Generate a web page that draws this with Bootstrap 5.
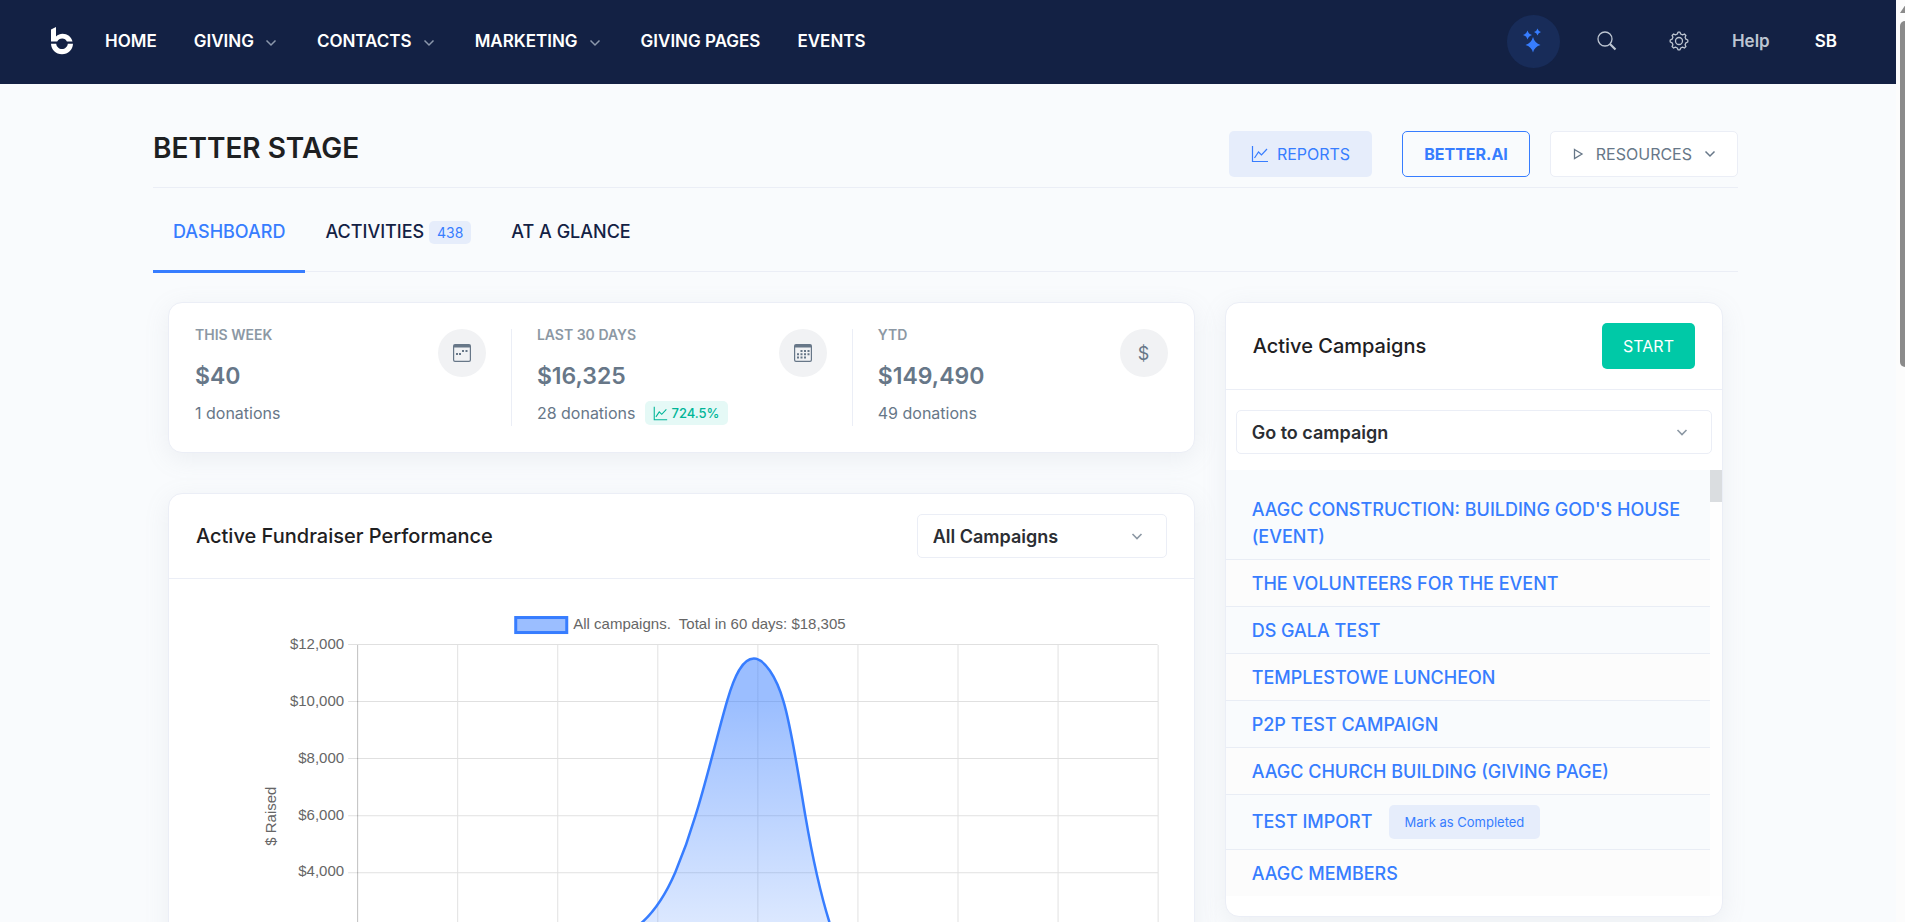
<!DOCTYPE html>
<html lang="en">
<head>
<meta charset="utf-8">
<meta name="viewport" content="width=device-width, initial-scale=1">
<title>Better Stage - Dashboard</title>
<link href="https://cdn.jsdelivr.net/npm/bootstrap@5.3.0/dist/css/bootstrap.min.css" rel="stylesheet">
<style>
  :root { --navy:#132144; --brand:#377dff; --soft:#e6edfb; --line:#ebeef6; --ink:#1e2022; --muted:#677788; }
  body { font-family:Inter, sans-serif; font-size:16px; color:var(--muted); background:#f9fbfd; height:100vh; overflow:hidden; }
  a { text-decoration:none; }
  .page-scroll { overflow:hidden; min-width:0; }
  .track { width:9px; background:#fcfcfc; overflow:hidden; padding:4px 0 0 4px; }
  .track svg { display:block; }
  .thumb { width:10px; height:346px; margin-top:8px; border-radius:5px 0 0 5px; background:#8b8b8b; }

  .topbar { background:var(--navy); height:84px; padding:0 59px 2px 50px; }
  .topbar a { color:#fff; font-size:17px; font-weight:600; }
  .main-links a, .side-links a { padding-top:2px; }
  .brand-mark { margin-right:31px; }
  .main-links { gap:37px; }
  .main-links .chev { margin:0 3px 0 11px; }
  .side-links { color:#bdc5d1; }
  .side-links a.help { color:#bdc5d1; margin:0 45px 0 43px; }
  .ai-btn { width:53px; height:53px; background:#182c59; margin-right:37px; }
  .search-btn { margin-right:52px; }

  .content { padding:0 158px 0 153px; }
  .page-head { height:104px; padding-top:47px; border-bottom:1px solid var(--line); }
  .page-head h1 { font-size:28px; line-height:34px; font-weight:600; color:var(--ink); }
  .btn { --bs-btn-font-size:16px; --bs-btn-line-height:24px; --bs-btn-padding-y:10px; --bs-btn-padding-x:20px; --bs-btn-border-radius:5px; }
  .page-head .btn { --bs-btn-padding-x:21px; }
  .btn-soft { --bs-btn-color:var(--brand); --bs-btn-bg:var(--soft); }
  .btn-frame { --bs-btn-color:var(--brand); --bs-btn-border-color:var(--brand); --bs-btn-font-weight:700; margin:0 20px 0 30px; }
  .btn-plain { --bs-btn-color:var(--muted); --bs-btn-bg:#fff; --bs-btn-border-color:var(--line); gap:12px; }
  .btn-go { --bs-btn-color:#fff; --bs-btn-bg:#00c9a7; }
  .btn-tiny { --bs-btn-font-size:13px; --bs-btn-line-height:18px; --bs-btn-padding-y:7px; --bs-btn-padding-x:15px; }

  .tabs { height:84px; border-bottom:1px solid var(--line); }
  .tabs a { color:var(--navy); font-size:18px; line-height:26px; font-weight:500; padding:31px 20px 0; height:85px; border-bottom:3px solid transparent; }
  .tabs a.active { color:var(--brand); border-color:var(--brand); }
  .count { font-size:14px; line-height:23px; font-weight:400; color:var(--brand); background:var(--soft); padding:0 8px; border-radius:5px; display:inline-block; }

  .columns { --bs-gutter-x:30px; padding-top:30px; }
  .panel { background:#fff; border:1px solid var(--line); border-radius:14px; box-shadow:0 6px 24px rgba(140,152,164,.125); }
  .panel + .panel { margin-top:40px; }
  .stats { padding:26px 1px; }
  .stat { min-height:97px; padding:0 25px; }
  .stat + .stat { border-left:1px solid var(--line); }
  .stat .kind { font-size:14px; line-height:12px; font-weight:600; color:#8c98a4; }
  .stat .amount { font-size:23px; line-height:30px; font-weight:600; margin-top:20px; }
  .stat .note { font-size:16px; line-height:26px; margin-top:9px; gap:10px; }
  .rise { font-size:13px; line-height:24px; font-weight:500; color:#00b598; background:#e5f9f6; border-radius:5px; padding:0 8px; gap:3px; }
  .stat-icon { width:48px; height:48px; background:#f1f2f4; color:#677788; font-size:18px; }
  .panel h2 { font-size:20px; line-height:26px; font-weight:500; color:var(--ink); }
  .panel-top { padding:20px 27px; border-bottom:1px solid var(--line); }
  .pick { height:44px; border:1px solid var(--line); border-radius:5px; padding:0 44px 0 15px; font-size:18px; font-weight:600; color:#2b2e33;
    background-color:#fff; background-position:right 22px center; background-size:14px 14px;
    background-image:url("data:image/svg+xml,%3Csvg xmlns='http://www.w3.org/2000/svg' viewBox='0 0 14 14'%3E%3Cpath d='M2.5 5l4.5 4.500 4.500-4.500' fill='none' stroke='%238c98a4' stroke-width='1.600'/%3E%3C/svg%3E"); }
  .pick-chart { width:250px; }

  .pick-row { padding:20px 10px 16px; }
  .camp-wrap { margin-bottom:20px; }
  .camp-list li { padding:10px 26px 9px; border-bottom:1px solid #e9edf5; background:#f9fbfd; font-size:18px; line-height:27px; }
  .camp-list li:nth-child(even) { background:#fcfcfc; }
  .camp-list li:first-child { padding-top:26px; }
  .camp-list li.tall { line-height:34px; padding-bottom:10px; }
  .camp-list li:last-child { border-bottom:0; }
  .camp-list a { color:var(--brand); font-weight:500; }
  .list-track { width:12px; background:#fefefe; }
  .list-thumb { height:32px; background:#dadde0; }
  .chart text { font-family:"Liberation Sans", Arial, sans-serif; font-size:15px; fill:#666; white-space:pre; }
</style>
</head>
<body class="d-flex">
<div class="page-scroll flex-grow-1">
  <nav class="topbar d-flex align-items-center">
    <a class="brand-mark" href="#" aria-label="Home">
      <svg class="d-block" width="24" height="28" viewBox="0 0 24 28" fill="#fff"><path d="M1 2.500L6 0v9.500C8 7.600 10.200 6.800 12.500 6.800c5 0 8.800 3 10 7.800h-5.600c-.9-2-2.500-3-4.700-3s-4 1-5 3H1z"/><path d="M1 16.800h5.200c.4 3.200 2.800 5.300 5.800 5.300s5.400-2.100 5.800-5.300H23c-.3 6-4.800 10.500-11 10.500S1.300 22.800 1 16.800z"/></svg>
    </a>
    <div class="main-links d-flex align-items-center">
      <a href="#">HOME</a>
      <a href="#">GIVING<svg class="chev" width="12" height="8" viewBox="0 0 12 8" fill="none" stroke="#8c98ac" stroke-width="1.500"><path d="M1.500 1.500L6 6l4.500-4.500"/></svg></a>
      <a href="#">CONTACTS<svg class="chev" width="12" height="8" viewBox="0 0 12 8" fill="none" stroke="#8c98ac" stroke-width="1.500"><path d="M1.500 1.500L6 6l4.500-4.500"/></svg></a>
      <a href="#">MARKETING<svg class="chev" width="12" height="8" viewBox="0 0 12 8" fill="none" stroke="#8c98ac" stroke-width="1.500"><path d="M1.500 1.500L6 6l4.500-4.500"/></svg></a>
      <a href="#">GIVING PAGES</a>
      <a href="#">EVENTS</a>
    </div>
    <div class="side-links d-flex align-items-center ms-auto">
      <button type="button" class="ai-btn border-0 rounded-circle p-0 d-flex align-items-center justify-content-center" aria-label="AI assistant">
        <svg width="20" height="26" viewBox="0 0 20 26" fill="#377dff"><path d="M10 9q1.600 6 7.500 8-5.900 1.500-7.500 7.500Q8.400 18.500 2.500 17 8.400 15 10 9z"/><path d="M4.500 2.500q.9 3.500 4.500 4.500-3.600 1-4.500 4.500Q3.600 8 0 7q3.600-1 4.500-4.500z"/><path d="M14.500.500q.7 2.800 3.500 3.500-2.800.700-3.500 3.500Q13.800 4.700 11 4q2.800-.7 3.500-3.500z"/></svg>
      </button>
      <button type="button" class="search-btn border-0 bg-transparent p-0 text-reset" aria-label="Search">
        <svg class="d-block" width="20" height="20" viewBox="0 0 20 20" fill="none" stroke="currentColor"><circle cx="8" cy="8" r="7" stroke-width="1.300"/><path d="M13 13l5.500 5.500" stroke-width="2.200"/></svg>
      </button>
      <button type="button" class="border-0 bg-transparent p-0 text-reset" aria-label="Settings">
        <svg class="d-block" width="20" height="20" viewBox="0 0 20 20" fill="none" stroke="currentColor" stroke-width="1.300"><circle cx="10" cy="10" r="3.500"/><path stroke-linejoin="round" d="M8.300 3L9 1.200h2L11.700 3l1.900.8 1.800-.8 1.500 1.500-.8 1.800.8 1.900 1.900.8v2l-1.900.8-.8 1.900.8 1.800-1.500 1.500-1.800-.8-1.900.8-.7 1.800H9L8.300 17l-1.900-.8-1.800.8-1.500-1.500.8-1.800-.8-1.900L1.200 11V9l1.900-.8.8-1.900-.8-1.800L4.600 3l1.800.8z"/></svg>
      </button>
      <a class="help" href="#">Help</a>
      <a href="#">SB</a>
    </div>
  </nav>

  <main class="content">
    <div class="page-head d-flex align-items-start">
      <h1 class="m-0">BETTER STAGE</h1>
      <a href="#" class="btn btn-soft ms-auto d-flex align-items-center gap-2">
        <svg width="18" height="18" viewBox="0 0 18 18" fill="none" stroke="currentColor" stroke-width="1.200"><path d="M1.500 1v15.500H17M3.500 13l4-6 3 3L16 4"/></svg>REPORTS</a>
      <a href="#" class="btn btn-frame">BETTER.AI</a>
      <button type="button" class="btn btn-plain d-flex align-items-center">
        <svg width="12" height="12" viewBox="0 0 12 12" fill="none" stroke="currentColor" stroke-width="1.300"><path d="M2.500 1.500L10 6l-7.500 4.500z"/></svg>RESOURCES
        <svg width="12" height="8" viewBox="0 0 12 8" fill="none" stroke="currentColor" stroke-width="1.500"><path d="M1.500 1.500L6 6l4.500-4.500"/></svg></button>
    </div>

    <nav class="tabs d-flex">
      <a href="#" class="active">DASHBOARD</a>
      <a href="#">ACTIVITIES <span class="count">438</span></a>
      <a href="#">AT A GLANCE</a>
    </nav>

    <div class="row columns mx-0">
      <div class="col-8">
        <section class="panel stats row row-cols-3 g-0">
          <div class="stat d-flex justify-content-between">
            <div>
              <div class="kind">THIS WEEK</div>
              <div class="amount">$40</div>
              <div class="note">1 donations</div>
            </div>
            <span class="stat-icon rounded-circle d-flex align-items-center justify-content-center">
              <svg width="20" height="20" viewBox="0 0 20 20" fill="currentColor"><path d="M3 1h14a2 2 0 0 1 2 2v14a2 2 0 0 1-2 2H3a2 2 0 0 1-2-2V3a2 2 0 0 1 2-2zM2.200 4.500V17c0 .5.300.8.800.8h14c.500 0 .8-.3.800-.8V4.500z" fill-rule="evenodd"/><path d="M4 10h2v2H4zM7 10h2v2H7zM10 7h2v2h-2zM13.500 7h2v2h-2z"/></svg>
            </span>
          </div>
          <div class="stat d-flex justify-content-between">
            <div>
              <div class="kind">LAST 30 DAYS</div>
              <div class="amount">$16,325</div>
              <div class="note d-flex align-items-center">28 donations
                <span class="rise d-flex align-items-center"><svg width="15" height="15" viewBox="0 0 18 18" fill="none" stroke="currentColor" stroke-width="1.300"><path d="M1.500 1v15.500H17M3.500 13l4-6 3 3L16 4"/></svg>724.5%</span>
              </div>
            </div>
            <span class="stat-icon rounded-circle d-flex align-items-center justify-content-center">
              <svg width="20" height="20" viewBox="0 0 20 20" fill="currentColor"><path d="M3 1h14a2 2 0 0 1 2 2v14a2 2 0 0 1-2 2H3a2 2 0 0 1-2-2V3a2 2 0 0 1 2-2zM2.200 4.500V17c0 .5.300.8.800.8h14c.500 0 .8-.3.800-.8V4.500z" fill-rule="evenodd"/><path d="M7.500 7h2v2h-2zM11 7h2v2h-2zM14.500 7h2v2h-2zM4 10.300h2v2H4zM7.500 10.300h2v2h-2zM11 10.300h2v2h-2zM14.500 10.300h2v2h-2zM4 13.600h2v2H4zM7.500 13.600h2v2h-2zM11 13.600h2v2h-2z"/></svg>
            </span>
          </div>
          <div class="stat d-flex justify-content-between">
            <div>
              <div class="kind">YTD</div>
              <div class="amount">$149,490</div>
              <div class="note">49 donations</div>
            </div>
            <span class="stat-icon rounded-circle d-flex align-items-center justify-content-center">$</span>
          </div>
        </section>

        <section class="panel">
          <div class="panel-top d-flex align-items-center justify-content-between">
            <h2 class="m-0"><label for="chart-campaign">Active Fundraiser Performance</label></h2>
            <select id="chart-campaign" class="form-select pick pick-chart"><option>All Campaigns</option></select>
          </div>
          <svg class="chart d-block w-100" viewBox="169 579 1024 440" role="img" aria-label="Dollars raised by all campaigns">
            <defs><linearGradient id="area" gradientUnits="userSpaceOnUse" x1="0" y1="700" x2="0" y2="1010"><stop offset="0" stop-color="#377dff" stop-opacity=".5"/><stop offset="1" stop-color="#377dff" stop-opacity=".05"/></linearGradient></defs>
            <rect x="515.500" y="617.500" width="51" height="15" fill="#9bbeff" stroke="#377dff" stroke-width="3"/>
            <text x="573" y="629">All campaigns.  Total in 60 days: $18,305</text>
            <path d="M348 644.500H1157M348 701.500H1157M348 758.500H1157M348 815.500H1157M348 872.500H1157M348 929.500H1157M457.500 645V990M557.500 645V990M657.500 645V990M757.500 645V990M857.500 645V990M957.500 645V990M1057.500 645V990M1157.500 645V990" stroke="#000" stroke-opacity=".12" fill="none"/>
            <path d="M357.500 645V990" stroke="#000" stroke-opacity=".25"/>
            <g text-anchor="end"><text x="344" y="649">$12,000</text><text x="344" y="706">$10,000</text><text x="344" y="763">$8,000</text><text x="344" y="820">$6,000</text><text x="344" y="876">$4,000</text><text x="344" y="933">$2,000</text></g>
            <text transform="translate(276 816) rotate(-90)" text-anchor="middle">$ Raised</text>
            <path d="M600 950C615 945 632 931 642 922 655 910 666 893 675 872 683 853 690 833 695 816 707 778 717 734 727 700 734 676 742 658.500 753.500 658.500 764 658.500 776 677 783 701 791 727 798 775 805 816 811 851 819 890 829 922L840 950" fill="url(#area)" stroke="#377dff" stroke-width="2.500"/>
          </svg>
        </section>
      </div>

      <div class="col-4">
        <section class="panel">
          <div class="panel-top d-flex align-items-center justify-content-between">
            <h2 class="m-0">Active Campaigns</h2>
            <button type="button" class="btn btn-go">START</button>
          </div>
          <div class="pick-row">
            <select class="form-select pick" aria-label="Go to campaign"><option>Go to campaign</option></select>
          </div>
          <div class="camp-wrap d-flex">
            <ul class="camp-list list-unstyled m-0 flex-fill">
              <li><a href="#">AAGC CONSTRUCTION: BUILDING GOD'S HOUSE (EVENT)</a></li>
              <li><a href="#">THE VOLUNTEERS FOR THE EVENT</a></li>
              <li><a href="#">DS GALA TEST</a></li>
              <li><a href="#">TEMPLESTOWE LUNCHEON</a></li>
              <li><a href="#">P2P TEST CAMPAIGN</a></li>
              <li><a href="#">AAGC CHURCH BUILDING (GIVING PAGE)</a></li>
              <li class="tall d-flex gap-3"><a href="#">TEST IMPORT</a><button type="button" class="btn btn-soft btn-tiny">Mark as Completed</button></li>
              <li><a href="#">AAGC MEMBERS</a></li>
            </ul>
            <div class="list-track flex-shrink-0"><div class="list-thumb"></div></div>
          </div>
        </section>
      </div>
    </div>
  </main>
</div>
<div class="track flex-shrink-0" aria-hidden="true">
  <svg width="12" height="9" viewBox="0 0 12 9"><path d="M6 0l6 9H0z" fill="#8b8b8b"/></svg>
  <div class="thumb"></div>
</div>
<script src="https://cdn.jsdelivr.net/npm/bootstrap@5.3.0/dist/js/bootstrap.bundle.min.js"></script>
</body>
</html>
